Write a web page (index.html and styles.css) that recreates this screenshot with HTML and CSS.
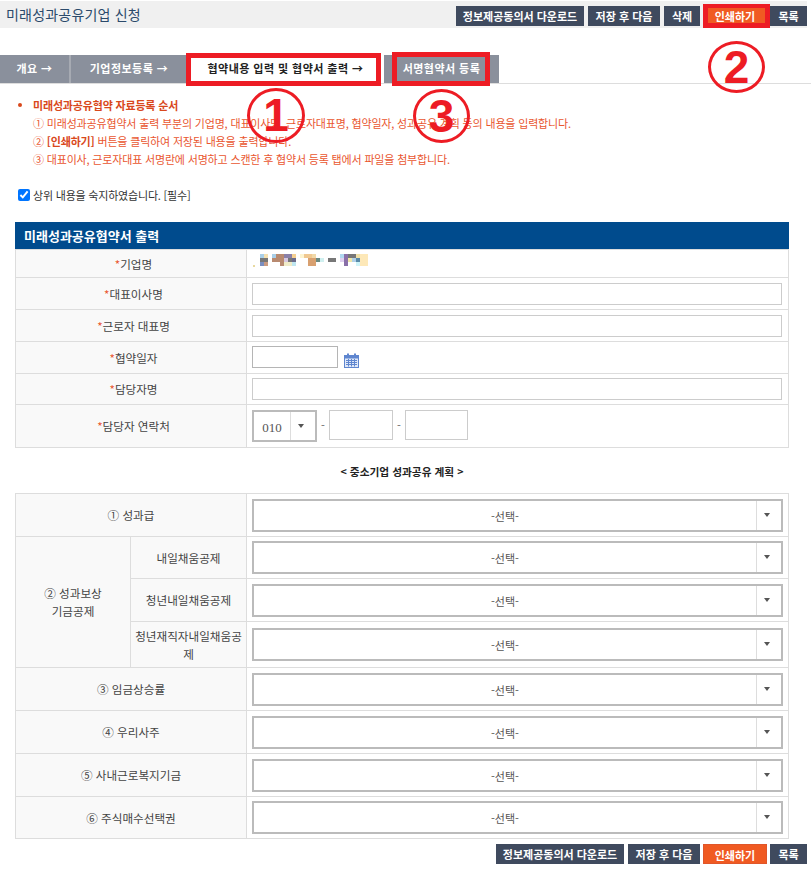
FILE: index.html
```html
<!DOCTYPE html>
<html lang="ko">
<head>
    <meta charset="UTF-8">
    <meta name="viewport" content="width=device-width, initial-scale=1.0">
    <title>미래성과공유기업 신청</title>
    <link rel="stylesheet" href="styles.css">
</head>
<body>
    <div class="page">
        <div class="top-bar">
            <h1>미래성과공유기업 신청</h1>
            <div class="btn-row">
                <a class="btn btn-wide">정보제공동의서 다운로드</a>
                <a class="btn btn-save">저장 후 다음</a>
                <a class="btn btn-del">삭제</a>
                <a class="btn btn-print">인쇄하기</a>
                <a class="btn btn-list">목록</a>
            </div>
        </div>

        <div class="tabs">
            <a class="tab tab-1">개요 →</a>
            <a class="tab tab-2">기업정보등록 →</a>
            <a class="tab tab-3 active">협약내용 입력 및 협약서 출력 →</a>
            <a class="tab tab-4">서명협약서 등록</a>
        </div>

        <div class="notice">
            <p class="notice-title">미래성과공유협약 자료등록 순서</p>
            <p>① 미래성과공유협약서 출력 부분의 기업명, 대표이사명, 근로자대표명, 협약일자, 성과공유 계획 등의 내용을 입력합니다.</p>
            <p>② <b>[인쇄하기]</b> 버튼을 클릭하여 저장된 내용을 출력합니다.</p>
            <p>③ 대표이사, 근로자대표 서명란에 서명하고 스캔한 후 협약서 등록 탭에서 파일을 첨부합니다.</p>
        </div>

        <label class="agree"><input type="checkbox" checked> 상위 내용을 숙지하였습니다. [필수]</label>

        <h2 class="table-title">미래성과공유협약서 출력</h2>
        <table class="form-table info-table">
            <colgroup><col class="col-label"><col></colgroup>
            <tr class="row-company">
                <th><em>*</em>기업명</th>
                <td>
                    <svg class="mosaic" width="116" height="13" viewBox="0 0 116 13">
                        <rect x="0" y="11" width="2" height="2" fill="#e8d9a0"/>
                        <rect x="7" y="0" width="4" height="4" fill="#a9cfe8"/>
                        <rect x="11" y="0" width="4" height="4" fill="#f5e0b0"/>
                        <rect x="7" y="4" width="8" height="4" fill="#777"/>
                        <rect x="7" y="8" width="4" height="4" fill="#7a8ec0"/>
                        <rect x="11" y="8" width="4" height="4" fill="#c99a80"/>
                        <rect x="19" y="0" width="4" height="4" fill="#a9cfe8"/>
                        <rect x="19" y="4" width="4" height="4" fill="#b88a70"/>
                        <rect x="23" y="0" width="8" height="8" fill="#b88a70"/>
                        <rect x="27" y="8" width="4" height="4" fill="#b88a70"/>
                        <rect x="31" y="0" width="8" height="4" fill="#8a80a8"/>
                        <rect x="31" y="4" width="4" height="4" fill="#d8c8e0"/>
                        <rect x="35" y="4" width="4" height="4" fill="#777"/>
                        <rect x="31" y="8" width="8" height="4" fill="#f0ecc8"/>
                        <rect x="39" y="0" width="4" height="4" fill="#f5cf90"/>
                        <rect x="39" y="4" width="4" height="4" fill="#6a6a8a"/>
                        <rect x="39" y="8" width="4" height="4" fill="#bfe6f0"/>
                        <rect x="47" y="0" width="4" height="4" fill="#fdf4d0"/>
                        <rect x="51" y="0" width="8" height="4" fill="#f0c890"/>
                        <rect x="55" y="4" width="8" height="8" fill="#d8a070"/>
                        <rect x="59" y="0" width="4" height="4" fill="#f0d8a8"/>
                        <rect x="63" y="4" width="4" height="4" fill="#6a8a80"/>
                        <rect x="67" y="4" width="4" height="4" fill="#d0f0f0"/>
                        <rect x="75" y="4" width="8" height="4" fill="#777"/>
                        <rect x="87" y="0" width="4" height="4" fill="#b0d8f0"/>
                        <rect x="91" y="0" width="4" height="4" fill="#8a70a8"/>
                        <rect x="95" y="0" width="8" height="4" fill="#777"/>
                        <rect x="87" y="4" width="4" height="4" fill="#e0d0f0"/>
                        <rect x="91" y="4" width="4" height="8" fill="#8a70a8"/>
                        <rect x="95" y="4" width="4" height="4" fill="#f0e8a8"/>
                        <rect x="99" y="4" width="4" height="4" fill="#b0d0e8"/>
                        <rect x="103" y="0" width="4" height="4" fill="#f0e0a8"/>
                        <rect x="103" y="4" width="4" height="4" fill="#5a8aa8"/>
                        <rect x="103" y="8" width="4" height="4" fill="#d0f4f8"/>
                        <rect x="107" y="0" width="8" height="12" fill="#fde8b8"/>
                    </svg>
                </td>
            </tr>
            <tr class="row-32"><th><em>*</em>대표이사명</th><td><input class="text-input full" type="text"></td></tr>
            <tr class="row-32"><th><em>*</em>근로자 대표명</th><td><input class="text-input full" type="text"></td></tr>
            <tr class="row-32">
                <th><em>*</em>협약일자</th>
                <td>
                    <div class="date-cell">
                        <input class="text-input date-input" type="text">
                        <svg class="cal-icon" width="15" height="15" viewBox="0 0 15 15">
                            <rect x="0.5" y="2.5" width="14" height="12" fill="#dfe8f8" stroke="#5f86cf"/>
                            <rect x="1" y="3" width="13" height="2.5" fill="#5f86cf"/>
                            <rect x="3" y="0.5" width="2" height="3.5" fill="#5f86cf"/>
                            <rect x="10" y="0.5" width="2" height="3.5" fill="#5f86cf"/>
                            <path d="M2 7.5h11M2 9.5h11M2 11.5h11M4.5 6v7.5M7.5 6v7.5M10.5 6v7.5" stroke="#5f86cf" stroke-width="1" fill="none"/>
                        </svg>
                    </div>
                </td>
            </tr>
            <tr class="row-31"><th><em>*</em>담당자명</th><td><input class="text-input full" type="text"></td></tr>
            <tr class="row-43">
                <th><em>*</em>담당자 연락처</th>
                <td>
                    <div class="phone-cell">
                        <div class="select select-phone"><span class="select-value">010</span><span class="select-arrow"></span></div>
                        <span class="dash">-</span>
                        <input class="text-input phone-input" type="text">
                        <span class="dash">-</span>
                        <input class="text-input phone-input phone-last" type="text">
                    </div>
                </td>
            </tr>
        </table>

        <p class="plan-title">&lt; 중소기업 성과공유 계획 &gt;</p>

        <table class="form-table plan-table">
            <colgroup><col class="col-group"><col class="col-sub"><col></colgroup>
            <tr class="row-43">
                <th colspan="2">① 성과급</th>
                <td><div class="select"><span class="select-value">-선택-</span><span class="select-arrow"></span></div></td>
            </tr>
            <tr class="row-42">
                <th rowspan="3">② 성과보상<br>기금공제</th>
                <th>내일채움공제</th>
                <td><div class="select"><span class="select-value">-선택-</span><span class="select-arrow"></span></div></td>
            </tr>
            <tr class="row-43">
                <th>청년내일채움공제</th>
                <td><div class="select"><span class="select-value">-선택-</span><span class="select-arrow"></span></div></td>
            </tr>
            <tr class="row-46">
                <th>청년재직자내일채움공제</th>
                <td><div class="select"><span class="select-value">-선택-</span><span class="select-arrow"></span></div></td>
            </tr>
            <tr class="row-43">
                <th colspan="2">③ 임금상승률</th>
                <td><div class="select"><span class="select-value">-선택-</span><span class="select-arrow"></span></div></td>
            </tr>
            <tr class="row-43">
                <th colspan="2">④ 우리사주</th>
                <td><div class="select"><span class="select-value">-선택-</span><span class="select-arrow"></span></div></td>
            </tr>
            <tr class="row-43">
                <th colspan="2">⑤ 사내근로복지기금</th>
                <td><div class="select"><span class="select-value">-선택-</span><span class="select-arrow"></span></div></td>
            </tr>
            <tr class="row-42">
                <th colspan="2">⑥ 주식매수선택권</th>
                <td><div class="select"><span class="select-value">-선택-</span><span class="select-arrow"></span></div></td>
            </tr>
        </table>

        <div class="btn-row bottom-row">
            <a class="btn btn-wide">정보제공동의서 다운로드</a>
            <a class="btn btn-save">저장 후 다음</a>
            <a class="btn btn-print">인쇄하기</a>
            <a class="btn btn-list">목록</a>
        </div>

        <!-- red marks drawn over the page -->
        <div class="mark-box box-tab3"></div>
        <div class="mark-box box-tab4"></div>
        <div class="mark-box box-print"></div>
        <div class="mark-num num-1">1</div>
        <div class="mark-num num-2">2</div>
        <div class="mark-num num-3">3</div>
    </div>
</body>
</html>
```

FILE: styles.css
```css
body {
    margin: 0;
    padding: 0;
    background: #fff;
    font-family: "Noto Sans CJK KR", "Noto Sans", sans-serif;
    font-size: 11px;
    color: #333;
}

.page {
    position: relative;
    width: 811px;
    height: 873px;
    overflow: hidden;
}

.top-bar {
    display: flex;
    justify-content: space-between;
    width: 807px;
    height: 27px;
    margin-top: 1px;
    background: #f0f0f0;
}

.top-bar h1 {
    margin: 0 0 0 6px;
    font-size: 14px;
    font-weight: 400;
    letter-spacing: 0.2px;
    line-height: 26px;
    color: #2b4a6b;
}

.btn-row {
    display: flex;
    gap: 4px;
    padding-top: 5px;
}

.btn {
    display: block;
    box-sizing: border-box;
    height: 20px;
    line-height: 20px;
    text-align: center;
    background: #3f4a5e;
    color: #fff;
    font-size: 11px;
    font-weight: 700;
}

.btn-wide { width: 128px; }
.btn-save { width: 72px; }
.btn-del { width: 36px; }
.btn-print { width: 64px; background: #f05a22; }
.btn-list { width: 37px; }

.top-bar .btn-print { margin: 0 -1px; }

.tabs {
    display: flex;
    height: 28px;
    margin-top: 27px;
    border-bottom: 1px solid #ddd;
}

.tab {
    box-sizing: border-box;
    height: 28px;
    line-height: 27px;
    text-align: center;
    background: #8a909c;
    color: #fff;
    font-weight: 700;
    font-size: 11px;
    letter-spacing: 0.45px;
}

.tab-1 { width: 71px; border-right: 2px solid #a6aab2; }
.tab-2 { width: 116px; }
.tab-3 { width: 197px; }
.tab-4 { width: 115px; }
.tab.active { background: #fff; color: #222; }

.notice {
    margin: 12px 0 0 32px;
    color: #e9562f;
    line-height: 18px;
    font-size: 11px;
    letter-spacing: -0.17px;
}

.notice p {
    margin: 0;
    padding-left: 1px;
}

.notice-title {
    position: relative;
    font-weight: 700;
    color: #d9481c;
    padding-left: 0;
}

.notice-title::before {
    content: "";
    position: absolute;
    left: -14px;
    top: 7px;
    width: 4px;
    height: 4px;
    border-radius: 50%;
    background: #d9481c;
}

.notice b { color: #d9481c; }

.agree {
    display: flex;
    align-items: center;
    gap: 3px;
    margin: 19px 0 0 18px;
    height: 16px;
    font-size: 11px;
    letter-spacing: -0.2px;
    color: #333;
}

.agree input {
    width: 12px;
    height: 12px;
    margin: 0;
}

.table-title {
    margin: 19px 22px 0 15px;
    height: 27px;
    padding-left: 9px;
    background: #004b8d;
    color: #fff;
    font-size: 13px;
    font-weight: 700;
    line-height: 27px;
}

.form-table {
    width: 774px;
    margin-left: 15px;
    border-collapse: collapse;
    table-layout: fixed;
}

.form-table th,
.form-table td {
    border: 1px solid #ddd;
    padding: 0;
}

.form-table th {
    background: #f9f9f9;
    font-weight: 400;
    font-size: 11.6px;
    color: #444;
    text-align: center;
    line-height: 18px;
}

.form-table td {
    padding: 0 6px 0 5px;
}

.info-table th {
    padding-left: 5px;
}

.form-table em {
    font-style: normal;
    color: #e9562f;
}

.col-label { width: 231px; }
.col-group { width: 115px; }
.col-sub { width: 116px; }

.row-company { height: 28px; }
.row-31 { height: 31px; }
.row-32 { height: 32px; }
.row-42 { height: 42px; }
.row-43 { height: 43px; }
.row-46 { height: 46px; }

.mosaic {
    display: block;
    margin: -6px 0 0 1px;
}

.text-input {
    display: block;
    box-sizing: border-box;
    height: 22px;
    margin: 0;
    padding: 0 4px;
    border: 1px solid #ccc;
    background: #fff;
}

.full { width: 530px; }

.date-cell {
    display: flex;
    align-items: flex-end;
    gap: 6px;
    margin-bottom: 1px;
}

.date-input {
    width: 86px;
    border-color: #b5b5b5;
}

.phone-cell {
    display: flex;
    align-items: flex-start;
}

.dash {
    width: 12px;
    line-height: 30px;
    text-align: center;
    color: #666;
}

.phone-input {
    width: 64px;
    height: 30px;
}

.phone-last { width: 63px; }

.select {
    display: flex;
    box-sizing: border-box;
    width: 531px;
    height: 33px;
    border: 2px solid #bbb;
    background: #fff;
}

.select-value {
    flex: 1;
    line-height: 30px;
    text-align: center;
    color: #555;
    font-size: 11px;
}

.select-arrow {
    position: relative;
    width: 24px;
    border-left: 1px solid #ddd;
}

.select-arrow::after {
    content: "";
    position: absolute;
    left: 7px;
    top: 12px;
    border-style: solid;
    border-width: 4px 3.5px 0;
    border-color: #555 transparent transparent;
}

.select-phone {
    width: 65px;
    height: 32px;
}

.select-phone .select-value {
    font-family: "Liberation Serif", serif;
    font-size: 13px;
    line-height: 32px;
}

.plan-title {
    margin: 15px 0 0;
    height: 30px;
    width: 804px;
    text-align: center;
    font-weight: 700;
    font-size: 10.7px;
    line-height: 18px;
    color: #222;
}

.bottom-row {
    justify-content: flex-end;
    gap: 3px;
    padding: 5px 4px 0 0;
}

.bottom-row .btn-wide { margin-right: 1px; }
.bottom-row .btn-print { border: 1px solid #e0562a; }

.mark-box {
    position: absolute;
    box-sizing: border-box;
    border: 5px solid #ed1c24;
}

.box-tab3 { left: 186px; top: 53px; width: 195px; height: 33px; }
.box-tab4 { left: 392px; top: 52px; width: 98px; height: 34px; }
.box-print { left: 703px; top: 4px; width: 67px; height: 24px; border-top-width: 4px; }

.mark-num {
    position: absolute;
    box-sizing: border-box;
    width: 58px;
    height: 55px;
    border: 3px solid #ed1c24;
    border-radius: 50%;
    color: #ed1c24;
    font-family: "Liberation Sans", sans-serif;
    font-size: 46px;
    font-weight: 700;
    line-height: 49px;
    text-align: center;
}

.num-1 { left: 247px; top: 88px; }
.num-2 { left: 708px; top: 41px; width: 57px; height: 52px; line-height: 46px; }
.num-3 { left: 413px; top: 89px; width: 57px; height: 54px; line-height: 48px; }
```
